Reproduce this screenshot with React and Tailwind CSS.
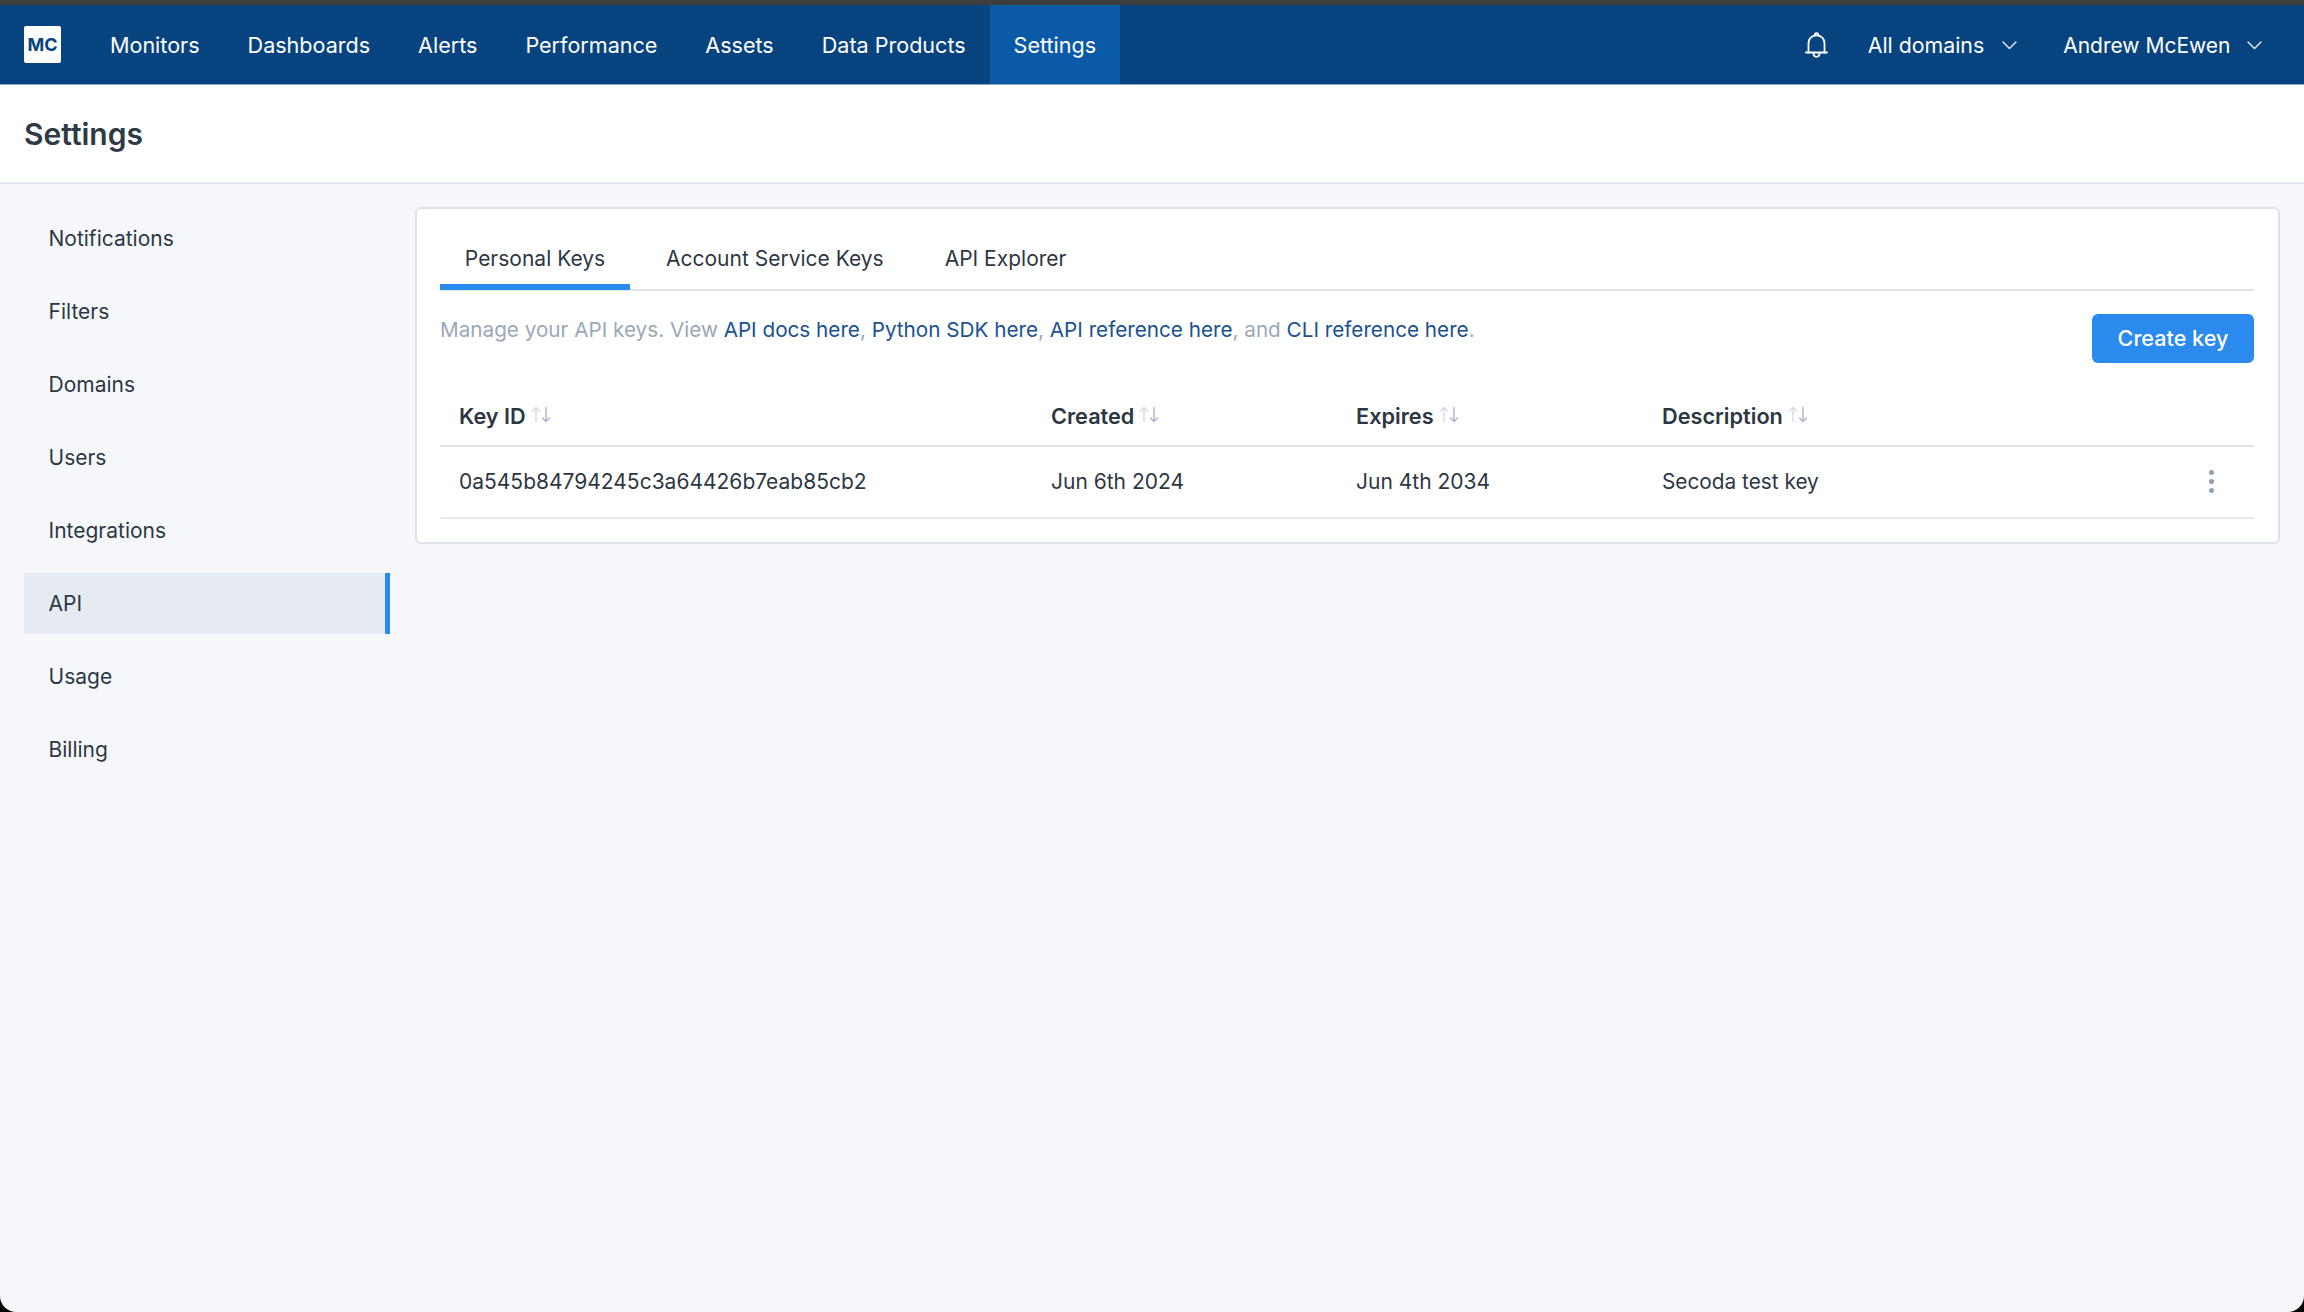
const font = { fontFamily: '"Inter", "Liberation Sans", sans-serif' };

function Chevron() {
  return (
    <svg width="15" height="9" viewBox="0 0 15 9" fill="none" stroke="currentColor" strokeWidth="1.5" strokeLinecap="round" strokeLinejoin="round">
      <path d="M1 1l6.5 6.5L14 1" />
    </svg>
  );
}

function Bell() {
  return (
    <svg width="23" height="26" viewBox="0 0 23 26" fill="none" stroke="white" strokeWidth="1.8" strokeLinecap="round" strokeLinejoin="round">
      <path d="M1 20.5h21" />
      <path d="M3.5 20.5V11C3.5 6.8 6.8 3.4 11.5 3.4S19.5 6.8 19.5 11v9.5" />
      <path d="M9.8 3.4c0-1.2.7-2.3 1.7-2.3s1.7 1.1 1.7 2.3" />
      <path d="M8.4 20.8c0 2.2 1.3 4 3.1 4s3.1-1.8 3.1-4" />
    </svg>
  );
}

function SortIcon() {
  return (
    <svg width="21" height="17" viewBox="0 0 21 17" fill="none" strokeWidth="1.4" strokeLinecap="round" strokeLinejoin="round" className="mb-[4px] ml-[5px]">
      <path d="M5 15.5V1.5M1.5 5L5 1.5 8.5 5" stroke="#d3dae3" />
      <path d="M15 1.5v14M11.5 12l3.5 3.5 3.5-3.5" stroke="#aab6c5" />
    </svg>
  );
}

function Kebab() {
  return (
    <div className="flex flex-col gap-[4px] items-center">
      <span className="w-[5px] h-[5px] rounded-full bg-[#8fa0b4]" />
      <span className="w-[5px] h-[5px] rounded-full bg-[#8fa0b4]" />
      <span className="w-[5px] h-[5px] rounded-full bg-[#8fa0b4]" />
    </div>
  );
}

const navItems = ["Monitors", "Dashboards", "Alerts", "Performance", "Assets", "Data Products"];
const sideItems = ["Notifications", "Filters", "Domains", "Users", "Integrations", "API", "Usage", "Billing"];
const cols = ["Key ID", "Created", "Expires", "Description"];

export default function App() {
  return (
    <div className="w-[2304px] h-[1312px] bg-black overflow-hidden" style={font}>
      <div className="h-full rounded-b-[16px] overflow-hidden bg-[#f5f7fb] flex flex-col">
        <div className="h-[5px] bg-[#3f3f3f] shrink-0" />
        <nav className="h-[80px] shrink-0 bg-[#07447f] border-b border-[#8fa9c6] flex items-center pl-[24px] pr-[42px] text-white text-[21.55px]">
          <div className="w-[37px] h-[37px] bg-white rounded-[2px] flex items-center justify-center text-[#07447f] text-[18px] font-bold mr-[25px]">
            MC
          </div>
          {navItems.map((item) => (
            <a key={item} className="h-full flex items-center px-[24px] pt-[2px]">{item}</a>
          ))}
          <a className="h-full flex items-center px-[24px] pt-[2px] bg-[#0a5aa8]">Settings</a>
          <div className="ml-auto flex items-center pt-[2px] text-[21.3px]">
            <span className="-mt-[2px]"><Bell /></span>
            <span className="ml-[40px]">All domains</span>
            <span className="ml-[18px] text-[#dbe5f0]"><Chevron /></span>
            <span className="ml-[46px] text-[21px]">Andrew McEwen</span>
            <span className="ml-[16.5px] text-[#dbe5f0]"><Chevron /></span>
          </div>
        </nav>
        <header className="h-[99px] shrink-0 bg-white border-b-2 border-[#dfe6ec] flex items-center px-[24px] pt-[2px]">
          <h1 className="text-[30px] font-semibold text-[#2f3a45]">Settings</h1>
        </header>
        <main className="flex-1 flex items-start pt-[23px] pl-[24px] pr-[24px] text-[21px] text-[#2d3743]">
          <aside className="w-[366px] shrink-0 flex flex-col gap-[12.1px] mt-[0.5px] mr-[25px]">
            {sideItems.map((item) => (
              <a
                key={item}
                className={
                  item === "API"
                    ? "h-[61px] flex items-center pl-[24.5px] pt-[1px] bg-[#e6ebf2] border-r-[5px] border-[#2a8aee]"
                    : "h-[61px] flex items-center pl-[24.5px] pt-[1px]"
                }
              >
                {item}
              </a>
            ))}
          </aside>
          <section className="flex-1 h-[337px] bg-white border-2 border-[#dbe2e9] rounded-[6px] pl-[23px] pr-[24px] pt-[23px]">
            <div className="h-[59px] flex border-b-2 border-[#dfe5ec]">
              <div className="w-[190px] h-[58px] flex items-center justify-center pt-[1px] border-b-[6px] border-[#2a8aee] -mb-[1px]">
                Personal Keys
              </div>
              <div className="ml-[36px] h-full flex items-center pb-[3px]">Account Service Keys</div>
              <div className="ml-[61px] h-full flex items-center pb-[3px]">API Explorer</div>
            </div>
            <div className="flex justify-between items-start pt-[23px] h-[95.5px]">
              <p className="text-[#9aa8b8] text-[20.7px]">
                Manage your API keys. View <a className="text-[#1a5192]">API docs here</a>, <a className="text-[#1a5192]">Python SDK here</a>, <a className="text-[#1a5192]">API reference here</a>, and <a className="text-[#1a5192]">CLI reference here</a>.
              </p>
              <button className="w-[162px] h-[49px] bg-[#2a8aee] text-white rounded-[6px] font-medium text-[21.6px]">Create key</button>
            </div>
            <div className="grid grid-cols-[592px_305px_306px_1fr_98px]">
              <div className="contents">
                {cols.map((c) => (
                  <div key={c} className="h-[60px] flex items-center pl-[19px] pt-[2px] border-b-2 border-[#dfe5ec] font-semibold text-[21.7px]">
                    {c}
                    <SortIcon />
                  </div>
                ))}
                <div className="h-[60px] border-b-2 border-[#dfe5ec]" />
              </div>
              <div className="contents">
                <div className="h-[72px] flex items-center pl-[19px] border-b-2 border-[#e6ebf0]">0a545b84794245c3a64426b7eab85cb2</div>
                <div className="h-[72px] flex items-center pl-[19px] border-b-2 border-[#e6ebf0]">Jun 6th 2024</div>
                <div className="h-[72px] flex items-center pl-[19px] border-b-2 border-[#e6ebf0]">Jun 4th 2034</div>
                <div className="h-[72px] flex items-center pl-[19px] border-b-2 border-[#e6ebf0] text-[20.8px]">Secoda test key</div>
                <div className="h-[72px] flex items-center justify-center pl-[13px] border-b-2 border-[#e6ebf0]"><Kebab /></div>
              </div>
            </div>
          </section>
        </main>
      </div>
    </div>
  );
}
